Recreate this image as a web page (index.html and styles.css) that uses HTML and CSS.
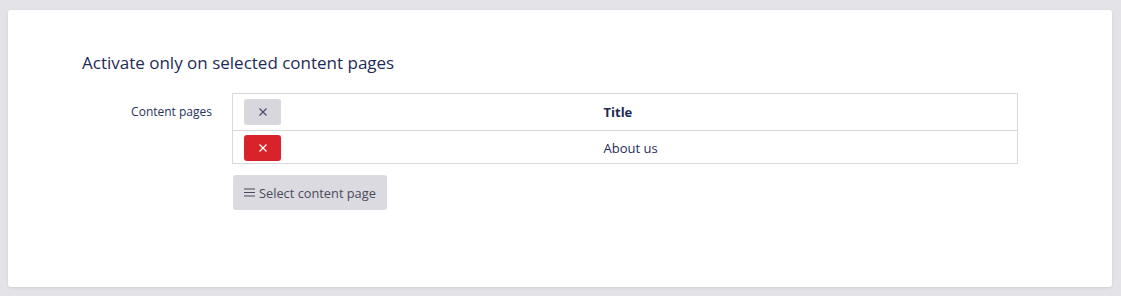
FILE: index.html
```html
<!DOCTYPE html>
<html>
    <head>
        <meta charset="utf-8">
        <link rel="stylesheet" href="styles.css">
    </head>
    <body>
        <div class="page">
            <div class="card">
                <h3 class="card-title">Activate only on selected content pages</h3>
                <div class="field">
                    <label class="field-label">Content pages</label>
                    <div class="field-body">
                        <table class="pick">
                            <colgroup>
                                <col class="c-act">
                                <col>
                            </colgroup>
                            <thead>
                                <tr>
                                    <th><button class="xbtn" type="button" title="Remove all"><svg width="8" height="8" viewBox="0 0 8 8"><path d="M.5 .5l7 7M7.5 .5l-7 7" stroke="currentColor" stroke-width="1.2"/></svg></button></th>
                                    <th class="t-title">Title</th>
                                </tr>
                            </thead>
                            <tbody>
                                <tr>
                                    <td><button class="xbtn danger" type="button" title="Remove"><svg width="8" height="8" viewBox="0 0 8 8"><path d="M.5 .5l7 7M7.5 .5l-7 7" stroke="currentColor" stroke-width="1.2"/></svg></button></td>
                                    <td>About us</td>
                                </tr>
                            </tbody>
                        </table>
                        <button class="select-btn" type="button">
                            <svg width="11" height="9" viewBox="0 0 11 9"><path d="M0 1h11M0 4.5h11M0 8h11" stroke="#4a4a5c" stroke-width="1.2"/></svg>
                            Select content page
                        </button>
                    </div>
                </div>
            </div>
        </div>
    </body>
</html>
```

FILE: styles.css
```css
html, body{
    margin: 0;
    background: #e4e3e8;
}
body{
    font-family: "Open Sans", "Noto Sans", sans-serif;
    color: #1f2c55;
}
body *{
    box-sizing: border-box;
}
.page{
    padding: 10px 9px 9px 8px;
}
.card{
    background: #fff;
    border-radius: 3px;
    box-shadow: 0 1px 3px rgba(60, 60, 90, .12);
    padding: 41px 74px 0 74px;
    height: 277px;
}
.card-title{
    margin: 0 0 18px 0;
    font-size: 17px;
    font-weight: 400;
    line-height: 24px;
    color: #1e2b57;
}
.field{
    display: grid;
    grid-template-columns: 130px 786px;
    column-gap: 20px;
}
.field-label{
    text-align: right;
    font-size: 12px;
    padding-top: 10px;
    color: #27335c;
}
.pick{
    width: 786px;
    border-collapse: collapse;
    table-layout: fixed;
    border: 1px solid #d9d8dd;
    font-size: 13px;
}
.pick col.c-act{
    width: 360px;
}
.pick th, .pick td{
    text-align: left;
    padding: 0 11px;
    vertical-align: middle;
}
.pick thead th{
    height: 37px;
    padding-bottom: 1px;
    border-bottom: 1px solid #d9d8dd;
}
.pick tbody td{
    height: 33px;
    padding-top: 1px;
}
.t-title{
    font-weight: 700;
    color: #1b2a55;
}
.pick td{
    color: #1f2d5a;
}
.xbtn{
    display: flex;
    align-items: center;
    justify-content: center;
    width: 37px;
    height: 26px;
    border: none;
    border-radius: 3px;
    background: #d8d7de;
    color: #4a4c66;
    padding: 0;
}
.xbtn.danger{
    background: #d9232b;
    color: #fff;
}
.select-btn{
    display: flex;
    align-items: center;
    gap: 4px;
    margin-top: 11px;
    margin-left: 1px;
    height: 35px;
    width: 154px;
    padding: 0 0 0 11px;
    border: none;
    border-radius: 3px;
    background: #dbdae0;
    color: #4a4a5c;
    font-family: "Open Sans", "Noto Sans", sans-serif;
    font-size: 12.8px;
}
```
